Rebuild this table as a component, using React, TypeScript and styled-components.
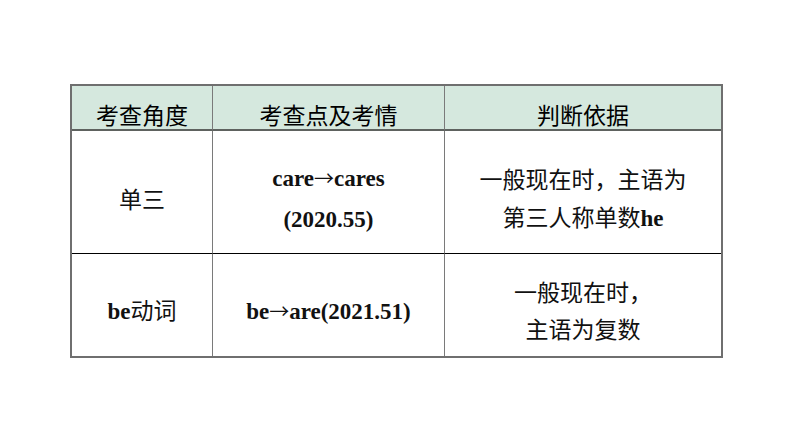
import type {ReactNode} from 'react'
import styled, {createGlobalStyle} from 'styled-components'

const GlobalStyle = createGlobalStyle`
  html, body {
    margin: 0;
    padding: 0;
    background: #fff;
  }
  body {
    font-family: "Noto Sans CJK SC", "Liberation Sans", sans-serif;
    color: #000;
  }
`

type Row = {
  angle: ReactNode
  point: ReactNode[]
  basis: ReactNode[]
  pad: number
  lineHeight: number
}

const getRows = (): Row[] => [
  {
    angle: '单三',
    point: [
      <Latin key='a'>care<Arrow>→</Arrow>cares</Latin>,
      <Latin key='b'>(2020.55)</Latin>,
    ],
    basis: ['一般现在时，主语为', <span key='b'>第三人称单数<Latin>he</Latin></span>],
    pad: 12,
    lineHeight: 38,
  },
  {
    angle: <span><Latin>be</Latin>动词</span>,
    point: [<Latin key='a'>be<Arrow>→</Arrow>are(2021.51)</Latin>],
    basis: ['一般现在时，', '主语为复数'],
    pad: 10,
    lineHeight: 37,
  },
]

const App = () => {
  const rows = getRows()
  return (
    <Page>
      <GlobalStyle />
      <Table>
        <HeadCell>考查角度</HeadCell>
        <HeadCell $divider>考查点及考情</HeadCell>
        <HeadCell $divider>判断依据</HeadCell>
        {rows.map((row, i) => {
          const last = i === rows.length - 1
          return [
            <BodyCell key={`a${i}`} $pad={row.pad} $last={last} $lh={row.lineHeight}>
              <Line>{row.angle}</Line>
            </BodyCell>,
            <BodyCell key={`b${i}`} $divider $pad={row.pad} $last={last} $lh={row.lineHeight}>
              {row.point.map((p, j) => <Line key={j}>{p}</Line>)}
            </BodyCell>,
            <BodyCell key={`c${i}`} $divider $pad={row.pad} $last={last} $lh={row.lineHeight}>
              {row.basis.map((p, j) => <Line key={j}>{p}</Line>)}
            </BodyCell>,
          ]
        })}
      </Table>
    </Page>
  )
}

export default App

const Page = styled.div`
  width: 794px;
  height: 447px;
  padding: 84px 0 0 70px;
  box-sizing: border-box;
`

const Table = styled.div`
  width: 653px;
  box-sizing: border-box;
  border: 2px solid #6f6f6f;
  display: grid;
  grid-template-columns: 140px 232px 277px;
  grid-template-rows: 45px 123px 102px;
`

const Cell = styled.div<{$divider?: boolean}>`
  box-sizing: border-box;
  display: flex;
  flex-direction: column;
  align-items: center;
  justify-content: center;
  font-size: 23px;
  border-left: ${p => (p.$divider ? '1px solid #7a7a7a' : 'none')};
`

const HeadCell = styled(Cell)`
  background: #d5e8de;
  border-bottom: 2px solid #5e625f;
  padding-top: 13px;
  color: #000;
`

const BodyCell = styled(Cell)<{$pad: number; $last: boolean; $lh: number}>`
  padding-top: ${p => p.$pad}px;
  border-bottom: ${p => (p.$last ? 'none' : '1px solid #000')};
  line-height: ${p => p.$lh}px;
  color: #111;
`

const Line = styled.div`
  white-space: nowrap;
`

const Latin = styled.span`
  font-family: "Liberation Serif", "Times New Roman", serif;
  font-weight: bold;
  font-size: 23px;
`

const Arrow = styled.span`
  font-family: "Noto Sans CJK SC", sans-serif;
  font-weight: 400;
  font-size: 20px;
`
